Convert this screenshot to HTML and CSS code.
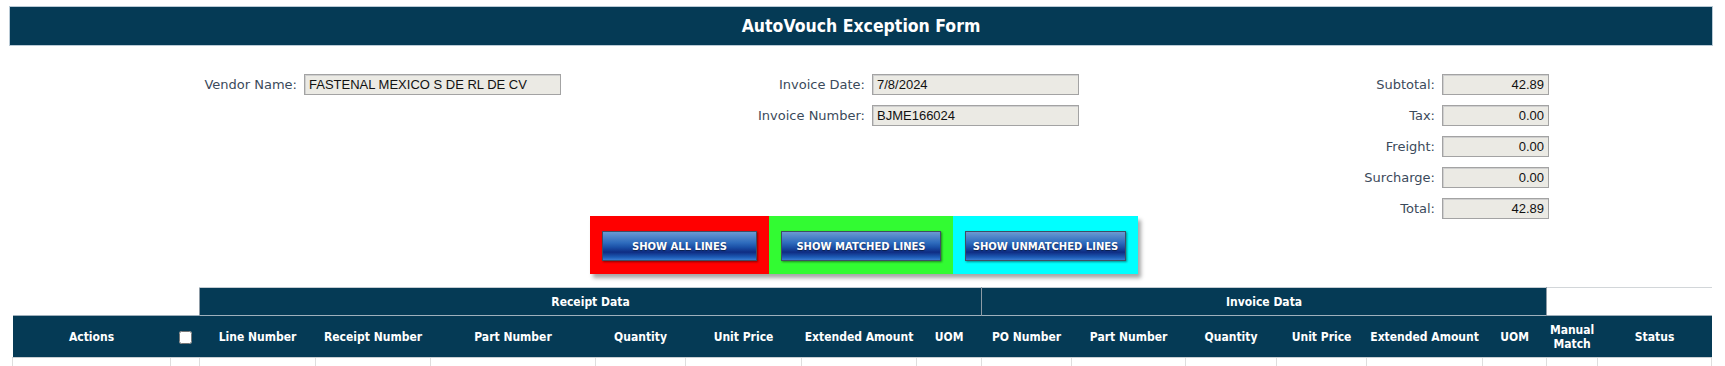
FILE: index.html
```html
<!DOCTYPE html>
<html lang="en">
<head>
    <meta charset="UTF-8">
    <meta name="viewport" content="width=device-width, initial-scale=1.0">
    <title>AutoVouch Exception Form</title>
    <link rel="stylesheet" href="styles.css">
</head>
<body>
    <div class="page">
        <div class="title-bar">AutoVouch Exception Form</div>

        <div class="summary">
            <div class="field-group vendor">
                <label for="vendor">Vendor Name:</label>
                <input class="field" type="text" id="vendor" value="FASTENAL MEXICO S DE RL DE CV" readonly>
            </div>
            <div class="field-group invoice">
                <label for="inv-date">Invoice Date:</label>
                <input class="field" type="text" id="inv-date" value="7/8/2024" readonly>
                <label for="inv-num">Invoice Number:</label>
                <input class="field" type="text" id="inv-num" value="BJME166024" readonly>
            </div>
            <div class="field-group totals">
                <label for="subtotal">Subtotal:</label>
                <input class="field num" type="text" id="subtotal" value="42.89" readonly>
                <label for="tax">Tax:</label>
                <input class="field num" type="text" id="tax" value="0.00" readonly>
                <label for="freight">Freight:</label>
                <input class="field num" type="text" id="freight" value="0.00" readonly>
                <label for="surcharge">Surcharge:</label>
                <input class="field num" type="text" id="surcharge" value="0.00" readonly>
                <label for="total">Total:</label>
                <input class="field num" type="text" id="total" value="42.89" readonly>
            </div>
        </div>

        <div class="filters">
            <div class="filter-bar">
                <div class="filter-box red"><button class="btn" type="button">Show All Lines</button></div>
                <div class="filter-box green"><button class="btn" type="button">Show Matched Lines</button></div>
                <div class="filter-box cyan"><button class="btn" type="button">Show Unmatched Lines</button></div>
            </div>
        </div>

        <table class="lines">
            <colgroup>
                <col><col><col><col><col><col><col><col><col>
                <col><col><col><col><col><col><col><col>
            </colgroup>
            <thead>
                <tr class="group-row">
                    <th class="blank" colspan="2"></th>
                    <th class="group" colspan="7">Receipt Data</th>
                    <th class="group" colspan="6">Invoice Data</th>
                    <th class="blank right" colspan="2"></th>
                </tr>
                <tr class="head-row">
                    <th>Actions</th>
                    <th><input type="checkbox" class="check-all"></th>
                    <th>Line Number</th>
                    <th>Receipt Number</th>
                    <th>Part Number</th>
                    <th>Quantity</th>
                    <th>Unit Price</th>
                    <th>Extended Amount</th>
                    <th>UOM</th>
                    <th>PO Number</th>
                    <th>Part Number</th>
                    <th>Quantity</th>
                    <th>Unit Price</th>
                    <th>Extended Amount</th>
                    <th>UOM</th>
                    <th>Manual Match</th>
                    <th>Status</th>
                </tr>
            </thead>
            <tbody>
                <tr>
                    <td></td><td></td><td></td><td></td><td></td><td></td><td></td><td></td><td></td>
                    <td></td><td></td><td></td><td></td><td></td><td></td><td></td><td></td>
                </tr>
            </tbody>
        </table>
    </div>
</body>
</html>
```

FILE: styles.css
```css
body {
    margin: 0;
    background: #fff;
    font-family: "DejaVu Sans", Verdana, sans-serif;
}

.page {
    padding: 6px 12px 0 9px;
}

.title-bar {
    height: 38px;
    line-height: 38px;
    border: 1px solid #b9cad6;
    background-color: #053a55;
    color: #fff;
    text-align: center;
    font-family: "DejaVu Sans Condensed", "DejaVu Sans", sans-serif;
    font-weight: bold;
    font-size: 17.5px;
}

/* header fields */
.summary {
    display: flex;
    align-items: flex-start;
    margin-top: 28px;
}

.field-group {
    display: grid;
    column-gap: 7px;
    row-gap: 10px;
    align-items: center;
}

.field-group label {
    text-align: right;
    font-size: 13px;
    color: #3b4a5b;
    white-space: nowrap;
}

.vendor {
    margin-left: 191px;
    grid-template-columns: 97px 257px;
}

.invoice {
    margin-left: 189px;
    grid-template-columns: 115px 207px;
}

.totals {
    margin-left: 261px;
    grid-template-columns: 95px 107px;
}

.field {
    box-sizing: border-box;
    height: 21px;
    margin: 0;
    padding: 0 4px;
    border: 1px solid #a3a3a3;
    box-shadow: inset 1px 1px 0 #cfcfcf;
    background-color: #ebeae4;
    font-family: "Liberation Sans", Arial, sans-serif;
    font-size: 13px;
    color: #111;
}

.field.num {
    text-align: right;
}

/* filter buttons */
.filters {
    display: flex;
    justify-content: center;
    margin-top: -3px;
    padding-left: 6px;
}

.filter-bar {
    display: flex;
    box-shadow: 3px 4px 4px rgba(0, 0, 0, 0.35);
}

.filter-box {
    padding: 15px 12px 13px;
}

.filter-box.red { background-color: #ff0000; }
.filter-box.green { background-color: #32fb32; }
.filter-box.cyan { background-color: #00ffff; }

.btn {
    display: block;
    width: 158px;
    height: 30px;
    padding: 0;
    border: 1px solid #3f4d63;
    background: linear-gradient(to bottom, #6a9ad2 0%, #2f6cbd 38%, #1a4fa6 55%, #0f2c83 72%, #1d5cb6 90%, #3b7bd0 100%);
    box-shadow: 1px 1px 2px rgba(0, 0, 0, 0.45);
    color: #fff;
    font-family: "DejaVu Sans", Verdana, sans-serif;
    font-weight: bold;
    font-size: 10px;
    text-transform: uppercase;
    text-shadow: 0 1px 1px rgba(0, 0, 0, 0.5);
    cursor: pointer;
}

.red .btn { width: 155px; }
.green .btn { width: 160px; }
.cyan .btn { width: 161px; }

/* lines table */
.lines {
    margin: 13px 0 0 3px;
    width: 1699px;
    table-layout: fixed;
    border-collapse: collapse;
    font-family: "DejaVu Sans Condensed", "DejaVu Sans", sans-serif;
}

.lines col:nth-child(1) { width: 158px; }
.lines col:nth-child(2) { width: 29px; }
.lines col:nth-child(3) { width: 116px; }
.lines col:nth-child(4) { width: 115px; }
.lines col:nth-child(5) { width: 165px; }
.lines col:nth-child(6) { width: 90px; }
.lines col:nth-child(7) { width: 116px; }
.lines col:nth-child(8) { width: 115px; }
.lines col:nth-child(9) { width: 65px; }
.lines col:nth-child(10) { width: 90px; }
.lines col:nth-child(11) { width: 114px; }
.lines col:nth-child(12) { width: 91px; }
.lines col:nth-child(13) { width: 90px; }
.lines col:nth-child(14) { width: 116px; }
.lines col:nth-child(15) { width: 64px; }
.lines col:nth-child(16) { width: 51px; }
.lines col:nth-child(17) { width: 114px; }

.lines th {
    padding: 0 2px;
    color: #fff;
    font-weight: bold;
    font-size: 12px;
    text-align: center;
    line-height: 14px;
}

.group-row th {
    height: 27px;
}

.group-row .group {
    background-color: #053a55;
    border-top: 1px solid #c3ccd2;
    border-left: 1px solid #8d9ba6;
    border-right: 1px solid #8d9ba6;
}

.group-row .blank {
    background: none;
}

.group-row .blank.right {
    border-top: 1px solid #d2d6d9;
}

.head-row th {
    height: 41px;
    background-color: #053a55;
    border-top: 1px solid #9fb0bc;
    border-bottom: 1px solid #c9cfd3;
}

.check-all {
    width: 13px;
    height: 13px;
    margin: 0;
    vertical-align: middle;
}

.lines td {
    height: 24px;
    border-left: 1px solid #dedede;
    border-right: 1px solid #dedede;
}
```
